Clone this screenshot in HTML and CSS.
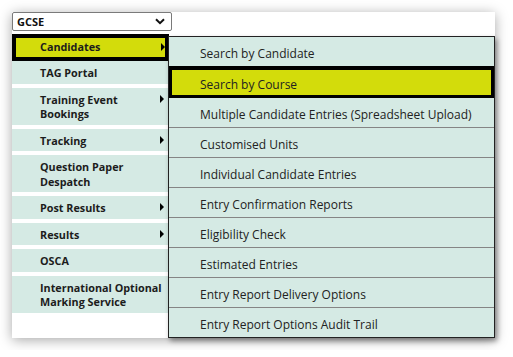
FILE: index.html
```html
<!DOCTYPE html>
<html lang="en">

<head>
  <meta charset="utf-8" />
  <title>Entries menu</title>
  <meta name="viewport" content="width=device-width, initial-scale=1">
  <link rel="stylesheet" href="styles.css">
</head>

<body>
  <div class="panel">
    <!-- =================== QUALIFICATION =================== -->
    <div class="picker">
      <span>GCSE</span>
      <svg class="chevron" width="10" height="7" viewBox="0 0 10 7">
        <path d="M1 1.2 L5 5.2 L9 1.2" fill="none" stroke="#111" stroke-width="2" />
      </svg>
    </div>

    <div class="menus">
      <!-- =================== MAIN MENU =================== -->
      <ul class="main-menu">
        <li class="active has-sub"><span>Candidates</span></li>
        <li><span>TAG Portal</span></li>
        <li class="has-sub"><span>Training Event<br>Bookings</span></li>
        <li class="has-sub"><span>Tracking</span></li>
        <li><span>Question Paper<br>Despatch</span></li>
        <li class="has-sub"><span>Post Results</span></li>
        <li class="has-sub"><span>Results</span></li>
        <li><span>OSCA</span></li>
        <li><span>International Optional<br>Marking Service</span></li>
      </ul>

      <!-- =================== SUB MENU =================== -->
      <ul class="sub-menu">
        <li>Search by Candidate</li>
        <li class="active">Search by Course</li>
        <li>Multiple Candidate Entries (Spreadsheet Upload)</li>
        <li>Customised Units</li>
        <li>Individual Candidate Entries</li>
        <li>Entry Confirmation Reports</li>
        <li>Eligibility Check</li>
        <li>Estimated Entries</li>
        <li>Entry Report Delivery Options</li>
        <li>Entry Report Options Audit Trail</li>
      </ul>
    </div>
  </div>
</body>
</html>
```

FILE: styles.css
```css
/* ===== RESET & BODY ===== */
* {
  box-sizing: border-box;
  margin: 0;
  padding: 0
}

body {
  font-family: "Open Sans", "Noto Sans", sans-serif;
  background: #fff;
  color: #1c1c1c;
  padding: 12px
}

/* ===== PANEL ===== */
.panel {
  width: 483px;
  background: #fff;
  box-shadow: 0 2px 12px rgba(0, 0, 0, .35);
  display: flex;
  flex-direction: column
}

.picker {
  width: 160px;
  height: 19px;
  border: 1px solid #7a7a7a;
  border-radius: 2px;
  display: flex;
  align-items: center;
  justify-content: space-between;
  padding: 0 6px 0 4px;
  font-size: 11px;
  font-weight: 700;
  color: #111
}

.menus {
  display: flex;
  align-items: flex-start
}

/* ===== MAIN MENU ===== */
.main-menu {
  list-style: none;
  width: 156px;
  margin-top: 3px;
  display: flex;
  flex-direction: column;
  gap: 4px
}

.main-menu li {
  background: #d5eae4;
  font-size: 10.8px;
  font-weight: 700;
  line-height: 14.4px;
  padding: 5px 4px 3.2px 28px;
  display: flex;
  justify-content: space-between;
  align-items: flex-start
}

.main-menu li.has-sub::after {
  content: "";
  margin-top: 2px;
  border-left: 4px solid #000;
  border-top: 4px solid transparent;
  border-bottom: 4px solid transparent
}

.main-menu li.active {
  background: #d3dc0b;
  border: 4px solid #000;
  padding: 2.3px 0 2.3px 24px;
  margin-bottom: -4px;
  margin-right: -1px
}

.main-menu li.active::after {
  margin-top: 3px
}

/* ===== SUB MENU ===== */
.sub-menu {
  list-style: none;
  width: 327px;
  margin-top: 5px;
  background: #d5eae4;
  border: 1px solid #222;
  box-shadow: 2px 3px 5px rgba(0, 0, 0, .4);
  position: relative
}

.sub-menu li {
  height: 30px;
  border-bottom: 1px solid #858585;
  padding: 3px 0 0 31px;
  display: flex;
  align-items: center;
  font-size: 12px;
  color: #222
}

.sub-menu li:last-child {
  border-bottom: 0;
  height: 29px
}

.sub-menu li.active {
  height: 32px;
  margin-top: -1px;
  background: #d3dc0b;
  border: 3px solid #000;
  border-top-width: 4px;
  padding-left: 28px
}
```
